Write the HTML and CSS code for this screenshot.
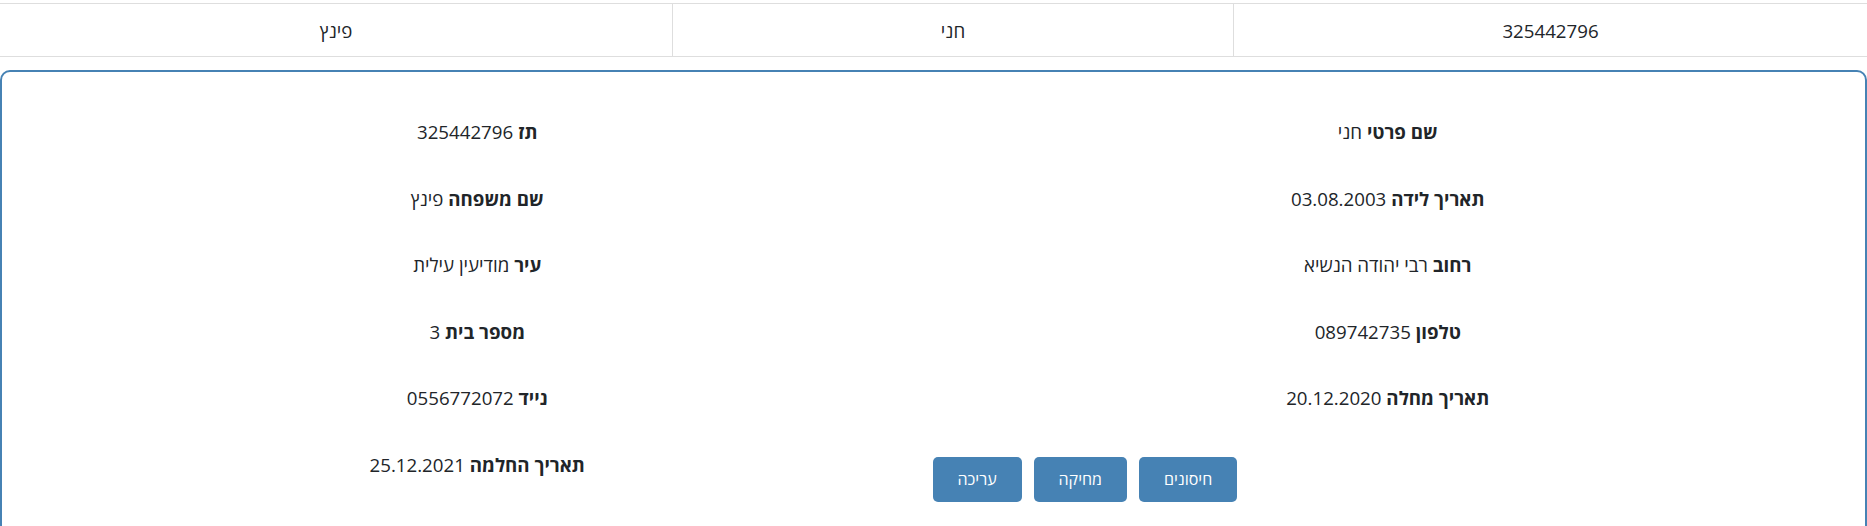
FILE: index.html
```html
<!DOCTYPE html>
<html lang="he" dir="rtl">
<head>
<meta charset="utf-8">
<title>פרטי מטופל</title>
<link rel="stylesheet" href="styles.css">
</head>
<body>
<table class="people">
  <tbody>
    <tr>
      <td class="cell c-id">325442796</td>
      <td class="cell c-first">חני</td>
      <td class="cell c-last">פינץ</td>
    </tr>
  </tbody>
</table>

<section class="card">
  <div class="details">
    <div class="field"><b>שם פרטי</b> חני</div>
    <div class="field"><b>תז</b> 325442796</div>
    <div class="field"><b>תאריך לידה</b> 03.08.2003</div>
    <div class="field"><b>שם משפחה</b> פינץ</div>
    <div class="field"><b>רחוב</b> רבי יהודה הנשיא</div>
    <div class="field"><b>עיר</b> מודיעין עילית</div>
    <div class="field"><b>טלפון</b> 089742735</div>
    <div class="field"><b>מספר בית</b> 3</div>
    <div class="field"><b>תאריך מחלה</b> 20.12.2020</div>
    <div class="field"><b>נייד</b> 0556772072</div>
    <div class="actions">
      <button class="btn" type="button">חיסונים</button>
      <button class="btn" type="button">מחיקה</button>
      <button class="btn" type="button">עריכה</button>
    </div>
    <div class="field"><b>תאריך החלמה</b> 25.12.2021</div>
  </div>
</section>
</body>
</html>
```

FILE: styles.css
```css
html, body {
  margin: 0;
  padding: 0;
  background: #ffffff;
}

body {
  font-family: "Open Sans", "Liberation Sans", "DejaVu Sans", sans-serif;
  font-size: 18.7px;
  color: #212529;
  overflow: hidden;
}

.people {
  width: 100%;
  margin-top: 3px;
  border-collapse: collapse;
  table-layout: fixed;
}

.cell {
  border-top: 1px solid #dedede;
  border-bottom: 1px solid #dedede;
  text-align: center;
  line-height: 26px;
  padding: 14px 8px 12px;
}

.cell + .cell {
  border-right: 1px solid #dedede;
}

.c-id {
  width: 617px;
}

.c-first {
  width: 544px;
}

.card {
  margin-top: 13px;
  border: 2px solid #4682b4;
  border-radius: 10px;
  padding: 27px 22px 40px 20px;
}

.details {
  display: grid;
  grid-template-columns: 1fr 1fr;
}

.field {
  text-align: center;
  line-height: 26.6px;
  padding: 20px 0;
}

.field b {
  font-weight: 700;
}

.actions {
  display: flex;
  justify-content: flex-end;
  align-items: flex-start;
  gap: 12px;
  padding-top: 25px;
}

.btn {
  height: 45px;
  padding: 0 25px;
  border: none;
  border-radius: 5px;
  background: #4682b4;
  color: #ffffff;
  font-family: "Open Sans", "Liberation Sans", "DejaVu Sans", sans-serif;
  font-size: 16px;
}
```
